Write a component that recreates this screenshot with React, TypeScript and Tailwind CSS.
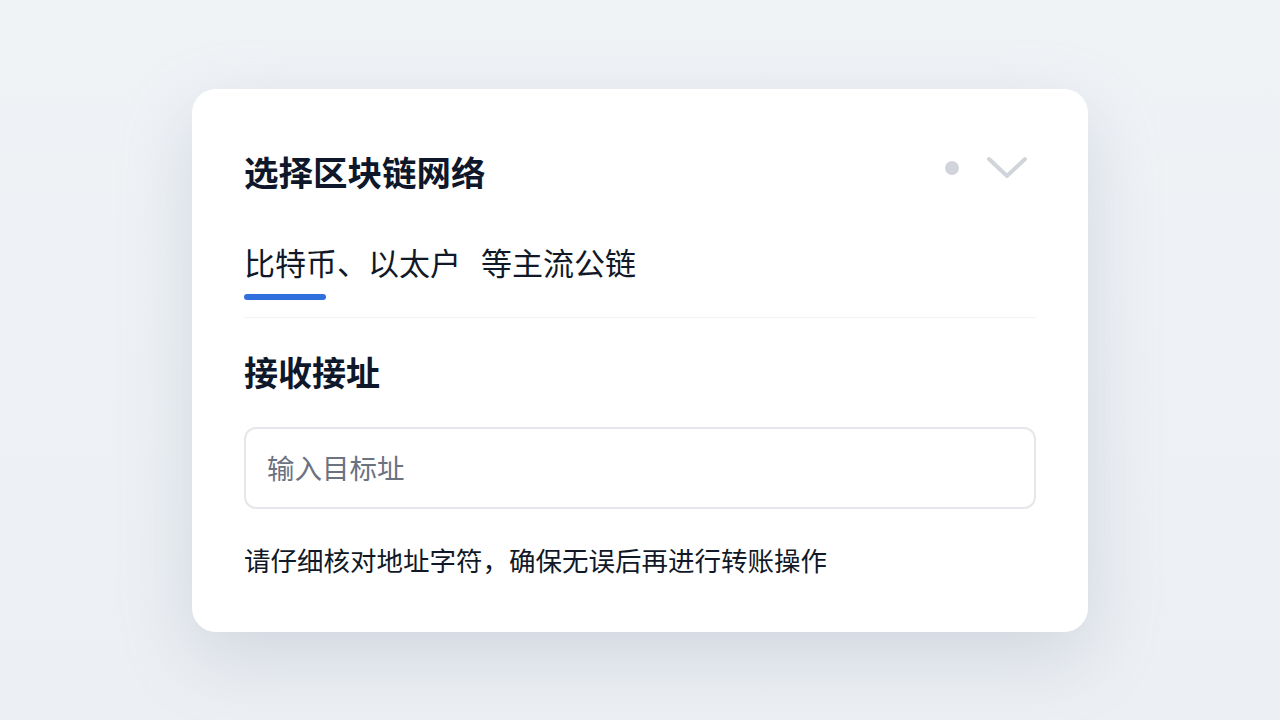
import React from 'react';

const font = { fontFamily: '"Noto Sans CJK SC", "Noto Sans", sans-serif' };

const App: React.FC = () => {
  return (
    <div
      className="w-[1280px] h-[720px] overflow-hidden bg-gradient-to-b from-[#f0f3f6] to-[#eceff3] pt-[89px]"
      style={font}
    >
      <div className="mx-auto w-[896px] h-[543px] rounded-[24px] bg-white shadow-[0_24px_70px_rgba(148,163,184,0.32)] px-[52px] pt-[60px]">
        {/* Header */}
        <div className="flex items-center justify-between h-[44px]">
          <h1 className="text-[34.5px] leading-[44px] font-bold text-[#0f172a]">
            选择区块链网络
          </h1>
          <div className="flex items-center gap-[27px] pr-[8px] -mt-[6px]">
            <span className="w-[14px] h-[14px] rounded-full bg-[#d1d5db]" />
            <svg width="42" height="26" viewBox="0 0 42 26" fill="none">
              <path
                d="M3 4 L21 21 L39 4"
                stroke="#d1d5db"
                strokeWidth="4"
                strokeLinecap="round"
                strokeLinejoin="round"
              />
            </svg>
          </div>
        </div>

        {/* Tab */}
        <div className="mt-[49px] text-[31px] leading-[40px] text-[#111827]">
          比特币、以太户<span className="inline-block w-[20px]" />等主流公链
        </div>
        <div className="mt-[12px] w-[82px] h-[6px] rounded-full bg-[#2f6fde]" />
        <div className="mt-[17px] h-px bg-[#f1f3f6]" />

        {/* Address */}
        <h2 className="mt-[32px] text-[34px] leading-[44px] font-bold text-[#0f172a]">
          接收接址
        </h2>
        <div className="mt-[33px] h-[82px] rounded-[12px] border-2 border-[#e5e7eb] flex items-center px-[21px]">
          <input
            className="w-full outline-none bg-transparent text-[27.5px] text-[#111827] placeholder:text-[#6b7280]"
            placeholder="输入目标址"
            style={font}
          />
        </div>
        <p className="mt-[33px] text-[26.5px] leading-[36px] text-[#111827]">
          请仔细核对地址字符，确保无误后再进行转账操作
        </p>
      </div>
    </div>
  );
};

export default App;
